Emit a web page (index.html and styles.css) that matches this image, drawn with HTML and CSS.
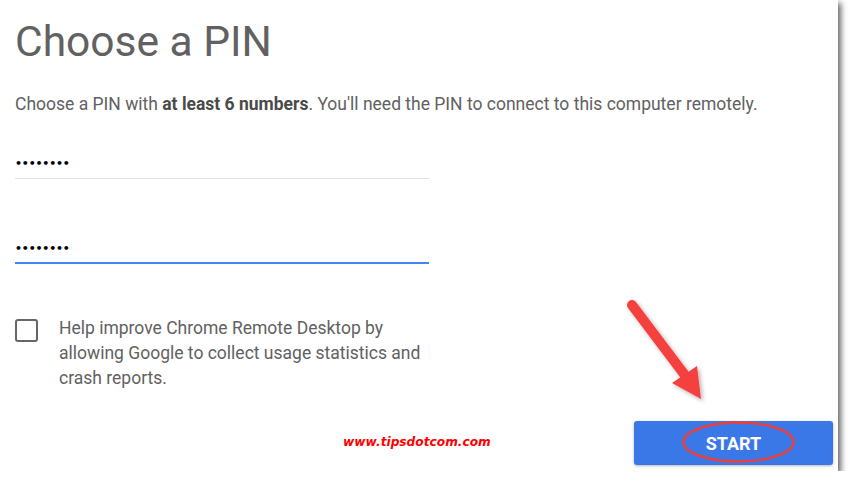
FILE: index.html
```html
<!DOCTYPE html>
<html lang="en">
<head>
  <meta charset="UTF-8">
  <title>Choose a PIN</title>
  <link rel="stylesheet" href="styles.css">
</head>
<body>
  <div class="card">
    <h1 class="title">Choose a PIN</h1>
    <p class="intro">Choose a PIN with <strong>at least 6 numbers</strong>. You'll need the PIN to connect to this computer remotely.</p>

    <div class="field">
      <span class="dots">&#8226;&#8226;&#8226;&#8226;&#8226;&#8226;&#8226;&#8226;</span>
    </div>
    <div class="field field-active">
      <span class="dots">&#8226;&#8226;&#8226;&#8226;&#8226;&#8226;&#8226;&#8226;</span>
    </div>

    <label class="consent">
      <span class="box"></span>
      <span class="consent-text">Help improve Chrome Remote Desktop by allowing Google to collect usage statistics and crash reports.</span>
    </label>

    <div class="actions">
      <button class="start">START</button>
    </div>

    <!-- screenshot annotations -->
    <span class="watermark">www.tipsdotcom.com</span>
    <svg class="annotations" width="854" height="487" viewBox="0 0 854 487">
      <defs>
        <filter id="soft" x="-20%" y="-20%" width="140%" height="140%">
          <feDropShadow dx="2" dy="2" stdDeviation="2" flood-color="#000" flood-opacity="0.3"/>
        </filter>
      </defs>
      <g filter="url(#soft)" fill="#f53f3f" stroke="none">
        <line x1="632" y1="305" x2="684" y2="374" stroke="#f53f3f" stroke-width="10" stroke-linecap="round"/>
        <polygon points="672,383 697,366 701,399"/>
      </g>
      <ellipse cx="738.5" cy="442" rx="55" ry="19.5" fill="none" stroke="#e8403c" stroke-width="2.5"/>
    </svg>
  </div>
</body>
</html>
```

FILE: styles.css
```css
body {
  margin: 0;
  background-color: #fff;
  font-family: Roboto, "Liberation Sans", sans-serif;
}

.card {
  position: relative;
  width: 838px;
  height: 471px;
  box-sizing: border-box;
  padding: 15px 5px 6px 15px;
  background-color: #fff;
  box-shadow: 3px 3px 6px rgba(0, 0, 0, 0.6);
  display: flex;
  flex-direction: column;
}

.title {
  margin: 0;
  font-size: 42.5px;
  line-height: 54px;
  font-weight: 400;
  color: #616161;
}

.intro {
  margin: 25px 0 0;
  font-size: 17.5px;
  line-height: 20px;
  color: #616161;
}

.intro strong {
  color: #4a4a4a;
  font-weight: 700;
}

.field {
  width: 414px;
  height: 30px;
  box-sizing: border-box;
  margin-top: 35px;
  border-bottom: 1px solid #e0e0e0;
  display: flex;
  align-items: center;
}

.field-active {
  margin-top: 55px;
  border-bottom: 2px solid #4285f4;
}

.dots {
  font-family: "DejaVu Sans", sans-serif;
  font-size: 11px;
  letter-spacing: -0.2px;
  color: #000;
  font-weight: 700;
}

.consent {
  margin-top: 52px;
  display: flex;
  align-items: flex-start;
}

.box {
  flex: none;
  width: 23px;
  height: 23px;
  box-sizing: border-box;
  margin-top: 3px;
  border: 2px solid #666;
  border-radius: 3px;
}

.consent-text {
  width: 375px;
  margin-left: 21px;
  font-size: 17.5px;
  line-height: 25px;
  color: #616161;
}

.actions {
  margin-top: auto;
  display: flex;
  justify-content: flex-end;
}

.start {
  width: 199px;
  height: 44px;
  border: none;
  border-radius: 3px;
  background-color: #3b78e7;
  box-shadow: 0 1px 3px rgba(0, 0, 0, 0.3);
  color: #fff;
  font-family: Roboto, "Liberation Sans", sans-serif;
  font-size: 18px;
  font-weight: 700;
}

.watermark {
  position: absolute;
  left: 343px;
  top: 435px;
  font-family: "DejaVu Sans", sans-serif;
  font-size: 12.2px;
  font-weight: 700;
  font-style: italic;
  color: #f00;
}

.annotations {
  position: absolute;
  left: 0;
  top: 0;
  pointer-events: none;
}
```
